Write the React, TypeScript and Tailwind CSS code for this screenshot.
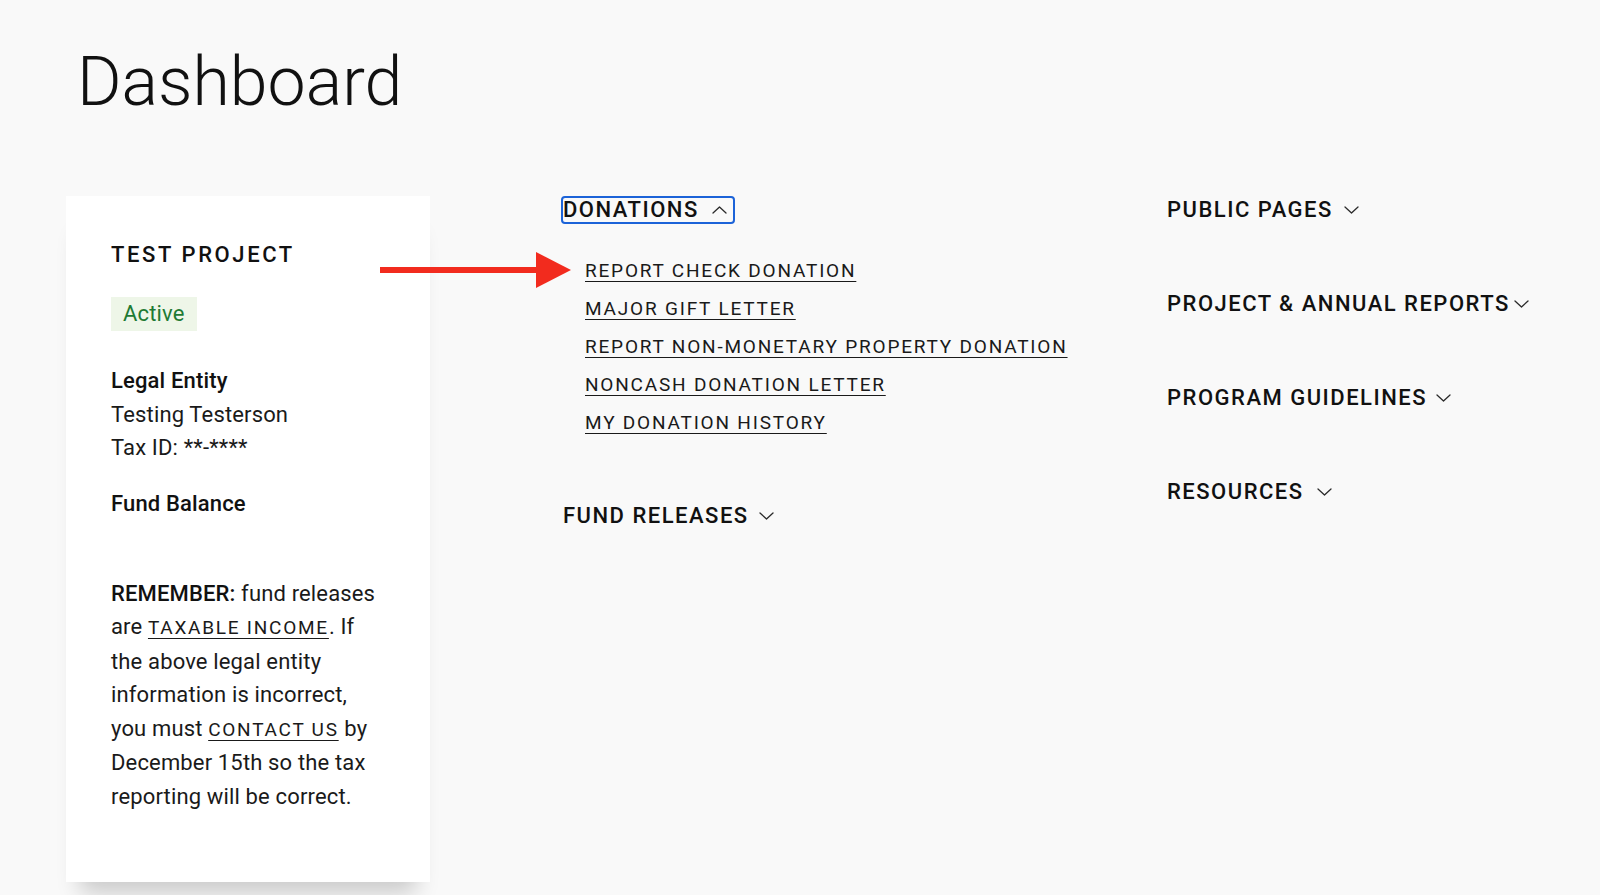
import type { ReactNode } from "react";

const Chevron = ({ up = false }: { up?: boolean }) => (
  <svg width="15" height="8" viewBox="0 0 15 8" fill="none" className="shrink-0">
    <polyline
      points={up ? "1,7 7.5,1 14,7" : "1,1 7.5,7 14,1"}
      stroke="#2b2b2b"
      strokeWidth="1.3"
      strokeLinecap="round"
      strokeLinejoin="round"
    />
  </svg>
);

type MenuProps = {
  label: string;
  open?: boolean;
  gap?: string;
};

function MenuHeading({ label, open = false, gap = "gap-[11px]" }: MenuProps) {
  return (
    <button
      className={`flex items-center ${gap} self-start border-2 rounded-[4px] pr-[6px] text-[22px] leading-[24px] font-medium tracking-[1.5px] text-[#111] ${
        open ? "border-[#1c63d8]" : "border-transparent"
      }`}
    >
      <span>{label}</span>
      <Chevron up={open} />
    </button>
  );
}

const SubLink = ({ children }: { children: ReactNode }) => (
  <a
    href="#"
    className="self-start text-[19px] leading-[38px] tracking-[1.8px] text-[#1a1a1a] underline underline-offset-[4px] decoration-1"
  >
    {children}
  </a>
);

const InlineLink = ({ children }: { children: ReactNode }) => (
  <a
    href="#"
    className="text-[19px] tracking-[1.75px] text-[#1a1a1a] underline underline-offset-[4px] decoration-1"
  >
    {children}
  </a>
);

const donationLinks = [
  "REPORT CHECK DONATION",
  "MAJOR GIFT LETTER",
  "REPORT NON-MONETARY PROPERTY DONATION",
  "NONCASH DONATION LETTER",
  "MY DONATION HISTORY",
];

function ProjectCard() {
  return (
    <div className="w-[364px] shrink-0 bg-white pt-[42px] pb-[69px] pl-[45px] pr-[48px] text-[22px] leading-[33px] tracking-[0.15px] text-[#1a1a1a] shadow-[0_24px_22px_-14px_rgba(0,0,0,0.2)]">
      <h2 className="font-medium tracking-[2.6px] text-[#111]">TEST PROJECT</h2>
      <span className="mt-[26px] inline-block h-[34px] bg-[#eef6e8] px-3 leading-[34px] text-[#1f7a34]">
        Active
      </span>

      <div className="mt-[33px] leading-[33.5px]">
        <div className="font-medium text-[#111]">Legal Entity</div>
        <div>Testing Testerson</div>
        <div>Tax ID: **-****</div>
      </div>

      <div className="mt-[22px] font-medium text-[#111]">Fund Balance</div>

      <p className="mt-[57px] leading-[33.5px]">
        <span className="font-medium text-[#111]">REMEMBER:</span> fund releases are{" "}
        <InlineLink>TAXABLE INCOME</InlineLink>. If the above legal entity information
        is incorrect, you must <InlineLink>CONTACT US</InlineLink> by December 15th so
        the tax reporting will be correct.
      </p>
    </div>
  );
}

export default function App() {
  return (
    <div
      className="relative h-[895px] overflow-hidden bg-[#f9f9f9]"
      style={{ fontFamily: "Roboto, 'Liberation Sans', sans-serif" }}
    >
      <h1 className="pl-[77px] pt-[48px] text-[68px] leading-none font-light text-[#111]">
        Dashboard
      </h1>

      <div className="mt-[80px] flex items-start pl-[66px]">
        <ProjectCard />

        {/* donations + fund releases */}
        <div className="ml-[131px] flex w-[604px] shrink-0 flex-col">
          <MenuHeading label="DONATIONS" open gap="gap-[13px]" />
          <div className="mt-[28px] flex flex-col pl-[24px]">
            {donationLinks.map((l) => (
              <SubLink key={l}>{l}</SubLink>
            ))}
          </div>
          <div className="mt-[60px]">
            <MenuHeading label="FUND RELEASES" gap="gap-[10px]" />
          </div>
        </div>

        {/* other sections */}
        <div className="flex flex-col gap-[66px]">
          <MenuHeading label="PUBLIC PAGES" />
          <MenuHeading label="PROJECT & ANNUAL REPORTS" gap="gap-[4px]" />
          <MenuHeading label="PROGRAM GUIDELINES" gap="gap-[9px]" />
          <MenuHeading label="RESOURCES" gap="gap-[13px]" />
        </div>
      </div>

      {/* annotation arrow */}
      <svg
        className="absolute left-[380px] top-[252px]"
        width="191"
        height="36"
        viewBox="0 0 191 36"
      >
        <rect x="0" y="15" width="158" height="6" fill="#f22b1e" />
        <polygon points="156,0 191,18 156,36" fill="#f22b1e" />
      </svg>
    </div>
  );
}
